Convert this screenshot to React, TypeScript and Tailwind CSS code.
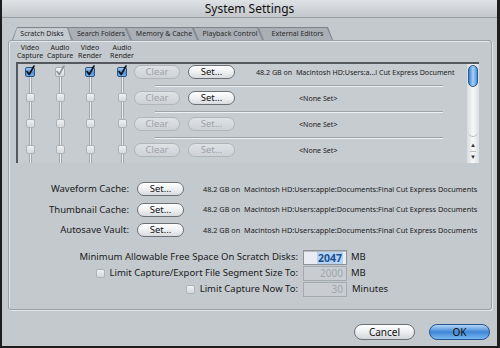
import React from "react";

type BoxState = "on" | "dim" | "off";

function Check({ color }: { color: string }) {
  return (
    <svg width="10" height="10" viewBox="0 0 10 10" className="overflow-visible">
      <path d="M2 4.5 L4.2 7.5 L9 -1" fill="none" stroke={color} strokeWidth="1.6" strokeLinecap="round" strokeLinejoin="round" />
    </svg>
  );
}

function Box({ state }: { state: BoxState }) {
  if (state === "on")
    return (
      <div className="flex h-[10px] w-[10px] items-center justify-center rounded-[2px] border border-[#28548a] bg-gradient-to-b from-[#a8cff3] via-[#4b8fd8] to-[#6fb0ee]">
        <Check color="#111" />
      </div>
    );
  if (state === "dim")
    return (
      <div className="flex h-[10px] w-[10px] items-center justify-center rounded-[2px] border border-[#a9aeb3] bg-gradient-to-b from-[#f3f4f5] to-[#d9dcdf]">
        <Check color="#8d9297" />
      </div>
    );
  return <div className="h-[9px] w-[9px] rounded-[2px] border border-[#aeb3b8] bg-gradient-to-b from-[#eef0f2] to-[#d6d9dc]" />;
}

function Pill({ label, enabled, w = "w-[47px]" }: { label: string; enabled: boolean; w?: string }) {
  return (
    <div
      className={`flex h-[14px] ${w} items-center justify-center rounded-full border text-[9.5px] ${
        enabled
          ? "border-[#6d7176] bg-gradient-to-b from-[#ffffff] via-[#eef0f2] to-[#d9dcdf] text-[#111]"
          : "border-[#b1b5ba] bg-gradient-to-b from-[#dfe2e5] to-[#cdd1d5] text-[#9ea3a8]"
      }`}
    >
      {label}
    </div>
  );
}

const rows: { boxes: BoxState[]; setOn: boolean; text: string }[] = [
  { boxes: ["on", "dim", "on", "on"], setOn: true, text: "48.2 GB on  Macintosh HD:Users:a...l Cut Express Document" },
  { boxes: ["off", "off", "off", "off"], setOn: true, text: "<None Set>" },
  { boxes: ["off", "off", "off", "off"], setOn: false, text: "<None Set>" },
  { boxes: ["off", "off", "off", "off"], setOn: false, text: "<None Set>" },
];

const colMargins = ["ml-0", "ml-[6px]", "ml-[6px]", "ml-[8px]"];

const tabs = [
  { label: "Search Folders", w: "w-[64px]" },
  { label: "Memory & Cache", w: "w-[72px]" },
  { label: "Playback Control", w: "w-[70px]" },
  { label: "External Editors", w: "w-[75px]" },
];

function Tab({ label, active, w }: { label: string; active?: boolean; w: string }) {
  if (active)
    return (
      <div className={`relative z-10 ${w} bg-[#7e848a] px-px pt-px [clip-path:polygon(5px_0,calc(100%-5px)_0,100%_100%,0_100%)]`}>
        <div className="flex h-[12px] items-center justify-center bg-[#c6cbd0] text-[7px] text-[#1d1d1d] [clip-path:polygon(4px_0,calc(100%-4px)_0,100%_100%,0_100%)]">
          {label}
        </div>
      </div>
    );
  return (
    <div className={`-ml-[5px] ${w} bg-[#7e848a] px-px pt-px [clip-path:polygon(0_0,calc(100%-5px)_0,100%_100%,5px_100%)]`}>
      <div className="flex h-[12px] items-center justify-center bg-[#a9afb5] pl-[4px] text-[7px] text-[#2a2a2a] [clip-path:polygon(0_0,calc(100%-5px)_0,100%_100%,5px_100%)]">
        {label}
      </div>
    </div>
  );
}

const path = "48.2 GB on  Macintosh HD:Users:apple:Documents:Final Cut Express Documents";

export default function App() {
  return (
    <div className="flex h-[348px] w-[500px] flex-col overflow-hidden border-b-2 border-l-2 border-r-[3px] border-[#1e1e1e] bg-[#c4c9ce] font-['Noto_Sans',sans-serif] text-[#1a1a1a]">
      {/* title bar */}
      <div className="flex h-[18px] shrink-0 items-center justify-center border-b border-[#9a9ea3] bg-gradient-to-b from-[#dfe2e5] to-[#c3c7cb] text-[12px] text-[#111]">
        System Settings
      </div>

      {/* tabs */}
      <div className="mt-[9px] flex h-[13px] pl-[10px]">
        <Tab label="Scratch Disks" active w="w-[60px]" />
        {tabs.map((t) => (
          <Tab key={t.label} label={t.label} w={t.w} />
        ))}
      </div>

      {/* panel */}
      <div className="ml-[6px] h-[270px] w-[484px] rounded-[3px] border border-[#9ba0a6] shadow-[inset_1px_1px_0_#e4e7ea,1px_1px_0_#e4e7ea]">
        <div className="ml-[9px] mt-[3px] flex text-[7px] leading-[8px] text-[#222]">
          {["Video Capture", "Audio Capture", "Video Render", "Audio Render"].map((h, i) => (
            <div key={h} className={`flex w-[24px] flex-col items-center ${colMargins[i]}`}>
              <span>{h.split(" ")[0]}</span>
              <span>{h.split(" ")[1]}</span>
            </div>
          ))}
        </div>

        {/* scratch disk list */}
        <div className="ml-[7px] mt-[2px] flex h-[101px] w-[463px] overflow-hidden border-l-2 border-t-2 border-[#55595e] bg-[#c7ccd1]">
          <div className="flex-1">
            {rows.map((r, ri) => (
              <div key={ri} className="flex h-[26px]">
                {r.boxes.map((b, bi) => (
                  <div key={bi} className={`flex w-[24px] flex-col items-center ${colMargins[bi]}`}>
                    <div className={`h-[3px] w-[3px] ${ri === 0 ? "" : "border-x border-[#a3a8ad] bg-[#eef0f2]"}`} />
                    <Box state={b} />
                    <div className="w-[3px] flex-1 border-x border-[#a3a8ad] bg-[#eef0f2]" />
                  </div>
                ))}
                <div className="flex flex-1 flex-col">
                  <div className="mt-px flex h-[14px] items-center">
                    <Pill label="Clear" enabled={false} w="w-[46px]" />
                    <div className="ml-[8px]">
                      <Pill label="Set..." enabled={r.setOn} />
                    </div>
                    <span
                      className={`whitespace-pre text-[7.1px] text-[#222] ${ri === 0 ? "ml-[21px]" : "ml-[64px]"}`}
                    >
                      {r.text}
                    </span>
                  </div>
                  <div className="ml-[21px] mt-[6px] h-[2px] w-[288px] border-b border-t border-b-[#eef0f2] border-t-[#9ea3a8]" />
                </div>
              </div>
            ))}
          </div>
          {/* scrollbar */}
          <div className="flex w-[12px] flex-col items-center bg-gradient-to-r from-[#d9dcdf] via-[#f7f8f9] to-[#dcdfe2]">
            <div className="mt-[1px] h-[22px] w-[10px] rounded-full border border-[#2c5d97] bg-gradient-to-r from-[#3c7fcf] via-[#a9d2f7] to-[#4a8ed8]" />
            <div className="flex-1" />
            <div className="mb-[2px] h-[6px] w-[10px] rounded-b-full border-b border-[#b5babf]" />
            <div className="flex h-[12px] items-center text-[6px] text-[#333]">▲</div>
            <div className="flex h-[12px] items-center border-t border-[#b9bdc2] text-[6px] text-[#333]">▼</div>
          </div>
        </div>

        {/* cache locations */}
        <div className="mt-[16px] flex flex-col">
          {["Waveform Cache:", "Thumbnail Cache:", "Autosave Vault:"].map((l) => (
            <div key={l} className="flex h-[20.5px] items-center">
              <span className="w-[120px] text-right text-[9.5px]">{l}</span>
              <div className="ml-[8px]">
                <Pill label="Set..." enabled />
              </div>
              <span className="ml-[19px] whitespace-pre text-[7.3px]">{path}</span>
            </div>
          ))}
        </div>

        {/* limits */}
        <div className="mt-[9px] flex flex-col text-[9.5px]">
          <div className="flex h-[16px] items-center">
            <span className="w-[289px] text-right">Minimum Allowable Free Space On Scratch Disks:</span>
            <div className="ml-[5px] flex h-[15px] w-[44px] items-center justify-end border border-[#8e9399] bg-[#e9edf1] pr-[3px] shadow-[inset_0_1px_0_#b8bcc0]">
              <span className="bg-[#b5d3f3] px-px text-[10.5px] font-bold leading-[12px] text-[#1c4f92]">2047</span>
            </div>
            <span className="ml-[4px]">MB</span>
          </div>
          <div className="flex h-[16px] items-center">
            <div className="flex w-[289px] items-center justify-end">
              <Box state="off" />
              <span className="ml-[5px]">Limit Capture/Export File Segment Size To:</span>
            </div>
            <div className="ml-[5px] flex h-[15px] w-[44px] items-center justify-end border border-[#a4a9ae] bg-[#c9cdd2] pr-[3px] text-[10px] text-[#a0a5aa]">
              2000
            </div>
            <span className="ml-[4px]">MB</span>
          </div>
          <div className="flex h-[16px] items-center">
            <div className="flex w-[289px] items-center justify-end">
              <Box state="off" />
              <span className="ml-[5px]">Limit Capture Now To:</span>
            </div>
            <div className="ml-[5px] flex h-[15px] w-[44px] items-center justify-end border border-[#a4a9ae] bg-[#c9cdd2] pr-[3px] text-[10px] text-[#a0a5aa]">
              30
            </div>
            <span className="ml-[5px]">Minutes</span>
          </div>
        </div>
      </div>

      {/* dialog buttons */}
      <div className="mt-[14px] flex justify-end pr-[7px]">
        <div className="flex h-[16px] w-[61px] items-center justify-center rounded-full border border-[#6d7176] bg-gradient-to-b from-[#ffffff] via-[#eceef0] to-[#d4d7da] text-[10px] text-[#111]">
          Cancel
        </div>
        <div className="ml-[14px] flex h-[16px] w-[61px] items-center justify-center rounded-full border border-[#24558f] bg-gradient-to-b from-[#b3d6f6] via-[#3f86d6] to-[#79b9f0] text-[10px] text-[#111]">
          OK
        </div>
      </div>
    </div>
  );
}
